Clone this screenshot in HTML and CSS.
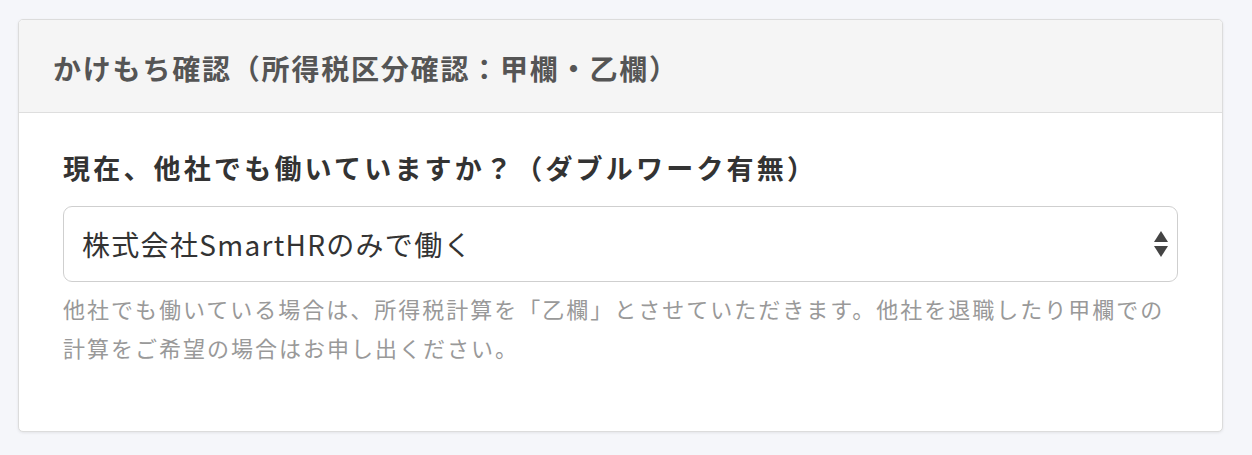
FILE: index.html
```html
<!DOCTYPE html>
<html lang="ja">
<head>
  <meta charset="UTF-8">
  <meta name="viewport" content="width=device-width, initial-scale=1.0">
  <title>かけもち確認</title>
  <link rel="stylesheet" href="styles.css">
</head>
<body>
  <div class="panel">
    <div class="panel-header">
      <h2>かけもち確認（所得税区分確認：甲欄・乙欄）</h2>
    </div>
    <div class="panel-body">
      <label class="field-label" for="doubleWork">現在、他社でも働いていますか？（ダブルワーク有無）</label>
      <div class="select-wrap">
        <select id="doubleWork" class="select">
          <option>株式会社SmartHRのみで働く</option>
          <option>他社でも働いている</option>
        </select>
        <svg class="select-arrows" width="14" height="26" viewBox="0 0 14 26">
          <path d="M7 0 L14 11 L0 11 Z" fill="#444"/>
          <path d="M0 15 L14 15 L7 26 Z" fill="#444"/>
        </svg>
      </div>
      <p class="help">他社でも働いている場合は、所得税計算を「乙欄」とさせていただきます。他社を退職したり甲欄での計算をご希望の場合はお申し出ください。</p>
    </div>
  </div>
</body>
</html>
```

FILE: styles.css
```css
body {
  margin: 0;
  padding: 19px 29px 23px 18px;
  background: #f5f6fa;
  font-family: 'Noto Sans CJK JP', 'Noto Sans', sans-serif;
  color: #333;
}

.panel {
  background: #fff;
  border: 1px solid #dcdcdc;
  border-radius: 5px;
  box-shadow: 0 1px 3px rgba(0, 0, 0, 0.08);
  overflow: hidden;
}

.panel-header {
  background: #f5f5f5;
  border-bottom: 1px solid #dedede;
  height: 93px;
  box-sizing: border-box;
  display: flex;
  align-items: center;
  padding: 4px 34px 0;
}

.panel-header h2 {
  margin: 0;
  font-size: 28px;
  font-weight: bold;
  color: #555;
  letter-spacing: 1.8px;
}

.panel-body {
  padding: 36px 44px 64px;
}

.field-label {
  display: block;
  font-size: 27px;
  font-weight: bold;
  color: #333;
  letter-spacing: 3.2px;
  line-height: 38px;
  margin-bottom: 19px;
}

.select-wrap {
  position: relative;
}

.select {
  display: block;
  width: 100%;
  height: 76px;
  appearance: none;
  -webkit-appearance: none;
  border: 1px solid #cfcfcf;
  border-radius: 9px;
  background: #fff;
  padding: 0 18px;
  font-family: inherit;
  font-size: 28px;
  letter-spacing: 1.3px;
  color: #333;
  outline: none;
}

.select-arrows {
  position: absolute;
  right: 10px;
  top: 25px;
}

.help {
  margin: 7px 0 0;
  font-size: 22px;
  line-height: 39px;
  color: #999;
  letter-spacing: 2px;
}
```
